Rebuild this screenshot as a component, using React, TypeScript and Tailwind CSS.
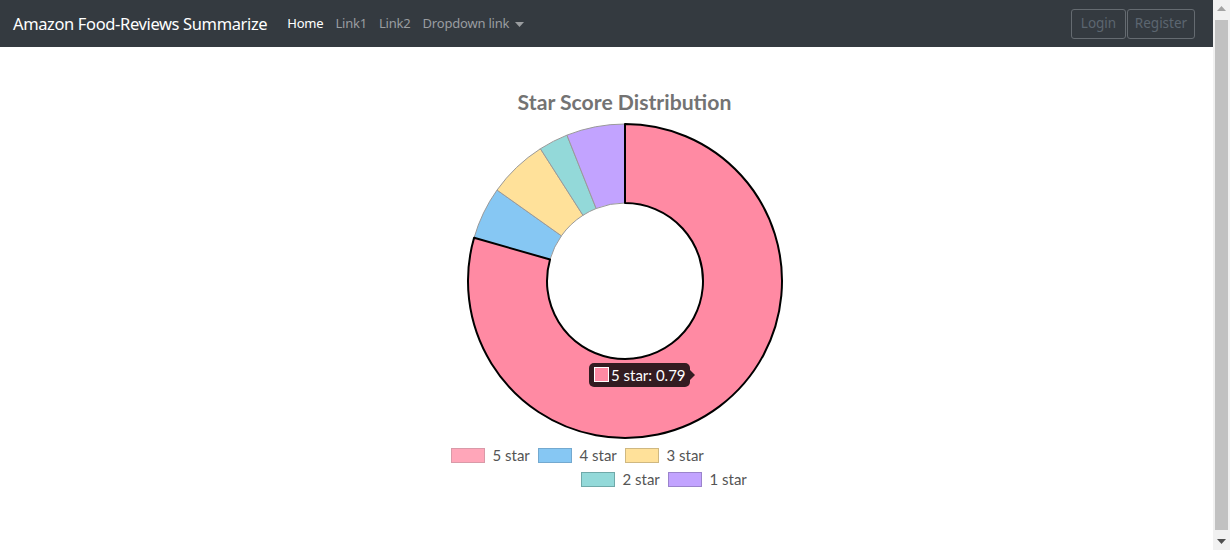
import React from "react";

const CX = 200;
const CY = 167;
const R = 157;
const RI = 78;

function pt(angleDeg: number, radius: number) {
  const a = (angleDeg * Math.PI) / 180;
  return [CX + radius * Math.sin(a), CY - radius * Math.cos(a)];
}

function arcPath(a0: number, a1: number) {
  const [x0, y0] = pt(a0, R);
  const [x1, y1] = pt(a1, R);
  const [x2, y2] = pt(a1, RI);
  const [x3, y3] = pt(a0, RI);
  const large = a1 - a0 > 180 ? 1 : 0;
  return `M ${x0} ${y0} A ${R} ${R} 0 ${large} 1 ${x1} ${y1} L ${x2} ${y2} A ${RI} ${RI} 0 ${large} 0 ${x3} ${y3} Z`;
}

const segments = [
  { a0: 286, a1: 305.4, fill: "#86c7f3" },
  { a0: 305.4, a1: 327.4, fill: "#ffe19a" },
  { a0: 327.4, a1: 338.3, fill: "#93d9d9" },
  { a0: 338.3, a1: 360, fill: "#c2a3ff" },
];

const legendRow1 = [
  { label: "5 star", fill: "bg-[#ffa6b9]", border: "border-[#d99aa8]" },
  { label: "4 star", fill: "bg-[#86c7f3]", border: "border-[#74a9cf]" },
  { label: "3 star", fill: "bg-[#ffe19a]", border: "border-[#cfb881]" },
];
const legendRow2 = [
  { label: "2 star", fill: "bg-[#93d9d9]", border: "border-[#6fa9a9]" },
  { label: "1 star", fill: "bg-[#c2a3ff]", border: "border-[#9b84cc]" },
];

function LegendItem({ label, fill, border }: { label: string; fill: string; border: string }) {
  return (
    <div className="flex items-center">
      <div className={`w-[34px] h-[15px] border ${fill} ${border}`} />
      <span className="ml-[8px] text-[15px] text-[#555] leading-[24px] w-[37px] whitespace-nowrap">{label}</span>
      <div className="w-[8px]" />
    </div>
  );
}

export default function App() {
  return (
    <div className="flex w-[1230px] h-[550px] overflow-hidden bg-white" style={{ fontFamily: "Lato, sans-serif" }}>
      <div className="flex flex-col flex-1">
        <nav
          className="flex items-center h-[47px] bg-[#343a40] pl-[13px] pr-[18px]"
          style={{ fontFamily: "'Segoe UI', 'Noto Sans', sans-serif" }}
        >
          <span className="text-white text-[16.5px] leading-none tracking-[-0.37px] whitespace-nowrap mt-[1px]">
            Amazon Food-Reviews Summarize
          </span>
          <div className="flex items-center ml-[20px] gap-[12px] text-[13px] tracking-[-0.2px] mt-[1px]">
            <span className="text-white">Home</span>
            <span className="text-[#9a9da0]">Link1</span>
            <span className="text-[#9a9da0]">Link2</span>
            <span className="flex items-center text-[#9a9da0]">
              Dropdown link
              <svg width="9" height="5" viewBox="0 0 9 5" className="ml-[6px]">
                <path d="M0 0 L9 0 L4.5 5 Z" fill="#9a9da0" />
              </svg>
            </span>
          </div>
          <div className="flex ml-auto gap-[1px] text-[13.5px]">
            <span className="flex items-center justify-center w-[55px] h-[30px] border border-[#656b71] rounded-[3px] text-[#5c6670]">
              Login
            </span>
            <span className="flex items-center justify-center w-[68px] h-[30px] border border-[#656b71] rounded-[3px] text-[#5c6670]">
              Register
            </span>
          </div>
        </nav>
        <main className="flex justify-center pl-[36px]">
          <div className="flex flex-col w-[400px]">
            <div className="mt-[43px] h-[24px] leading-[24px] text-center text-[21.2px] font-bold text-[#737373] whitespace-nowrap">
              Star Score Distribution
            </div>
            <svg width="400" height="326" viewBox="0 0 400 326">
              {segments.map((s, i) => (
                <path key={i} d={arcPath(s.a0, s.a1)} fill={s.fill} stroke="#9a9a9a" strokeWidth="1" />
              ))}
              <path d={arcPath(0, 286)} fill="#ff8aa3" stroke="#000" strokeWidth="2" strokeLinejoin="round" />
              <rect x="164" y="249" width="101" height="24" rx="5" fill="#331c21" />
              <path d="M265 256 L270 261 L265 266 Z" fill="#331c21" />
              <rect x="169.5" y="253.5" width="14" height="14" fill="#ff8aa3" stroke="#fff" strokeWidth="1" />
              <text x="186" y="266.5" fill="#fff" fontSize="15" fontFamily="Lato, sans-serif">
                5 star: 0.79
              </text>
            </svg>
            <div className="flex mt-[3px] ml-[26px]">
              {legendRow1.map((l) => (
                <LegendItem key={l.label} {...l} />
              ))}
            </div>
            <div className="flex ml-[156px]">
              {legendRow2.map((l) => (
                <LegendItem key={l.label} {...l} />
              ))}
            </div>
          </div>
        </main>
      </div>
      <div className="flex flex-col items-center w-[17px] h-[550px] bg-[#f1f1f1]">
        <div className="flex items-center justify-center h-[17px]">
          <svg width="9" height="5" viewBox="0 0 9 5">
            <path d="M0 5 L9 5 L4.5 0 Z" fill="#a3a3a3" />
          </svg>
        </div>
        <div className="w-[13px] flex-1 mt-[3px] mb-[3px] bg-[#c1c1c1]" />
        <div className="flex items-center justify-center h-[17px]">
          <svg width="9" height="5" viewBox="0 0 9 5">
            <path d="M0 0 L9 0 L4.5 5 Z" fill="#505050" />
          </svg>
        </div>
      </div>
    </div>
  );
}
